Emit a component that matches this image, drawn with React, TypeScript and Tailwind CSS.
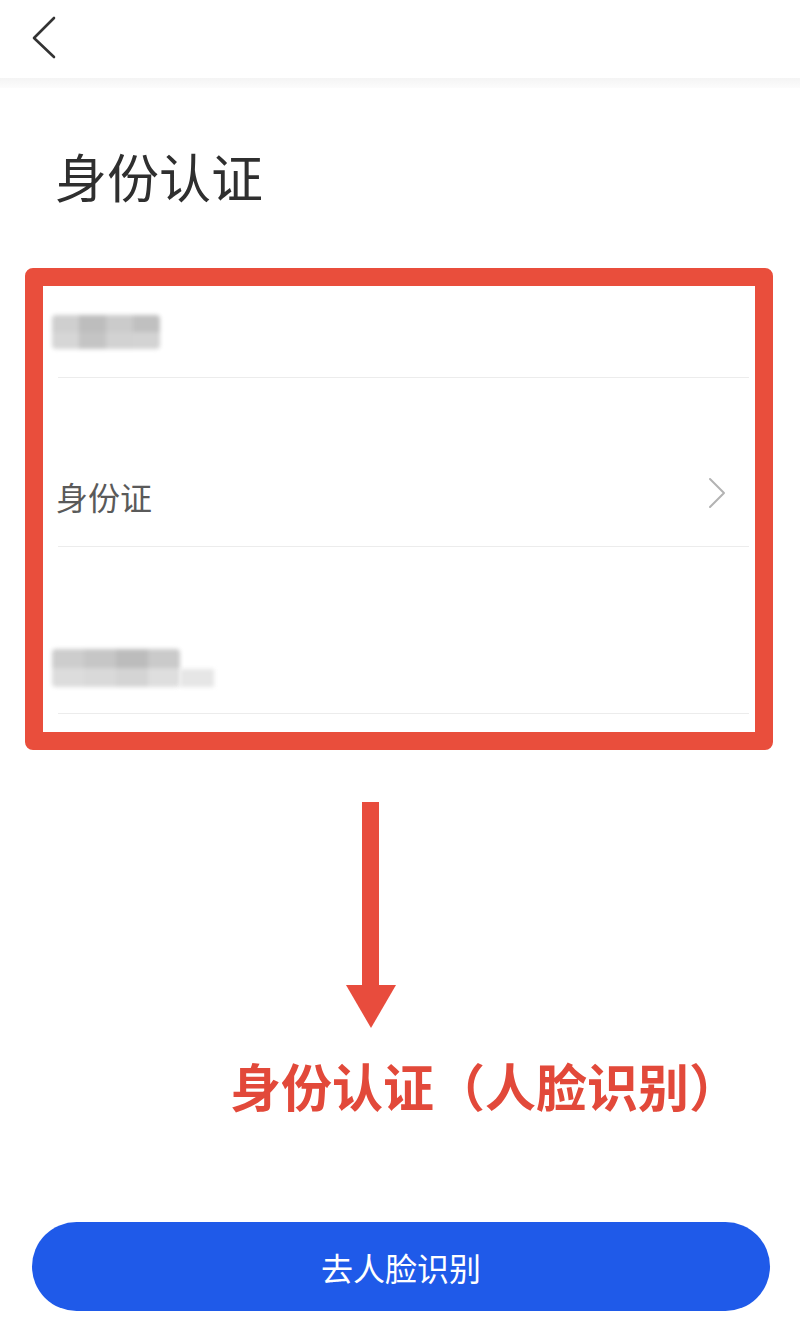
import React from "react";

const FONT = { fontFamily: '"Noto Sans CJK SC", "Noto Sans", sans-serif' };

function Mosaic({ cells, cols, cell, h }: { cells: string[]; cols: number; cell: number; h: number }) {
  return (
    <div
      className="grid blur-[2px] rounded-[4px] overflow-hidden"
      style={{ gridTemplateColumns: `repeat(${cols}, ${cell}px)`, gridAutoRows: `${h}px` }}
    >
      {cells.map((c, i) => (
        <div key={i} style={{ background: c }} />
      ))}
    </div>
  );
}

export default function App() {
  return (
    <div className="w-[800px] h-[1322px] bg-white overflow-hidden text-[#333]" style={FONT}>
      {/* Header */}
      <div className="h-[78px] relative">
        <svg className="absolute left-[30px] top-[15px]" width="28" height="46" viewBox="0 0 28 46">
          <polyline points="24,3 4,23 24,42" fill="none" stroke="#333" strokeWidth="2.6" strokeLinecap="round" strokeLinejoin="round" />
        </svg>
      </div>
      <div className="h-[10px] bg-gradient-to-b from-[#f4f4f4] to-[#fcfcfc]" />

      {/* Title */}
      <div className="mt-[60px] pl-[55px] text-[52px] leading-[56px] text-[#2f2f2f]">身份认证</div>

      {/* Red highlighted card */}
      <div className="mt-[64px] ml-[25px] w-[748px] h-[482px] border-[18px] border-[#e94e3c] rounded-[8px] bg-white flex flex-col">
        <div className="h-[91px] flex items-end pb-[28px] pl-[9px]">
          <Mosaic
            cols={4}
            cell={27}
            h={17}
            cells={["#cfcfcf", "#bdbdbd", "#cbcbcb", "#c0c0c0", "#d6d6d6", "#c4c4c4", "#d2d2d2", "#d3d3d3"]}
          />
        </div>
        <div className="h-[1px] ml-[15px] mr-[6px] bg-[#ececec]" />
        <div className="h-[168px] flex items-end pb-[30px] pl-[13px] pr-[28px] justify-between">
          <span className="text-[32px] leading-[40px] text-[#5a5a5a]">身份证</span>
          <svg className="mb-[7px]" width="20" height="32" viewBox="0 0 20 32">
            <polyline points="3,2 17,16 3,30" fill="none" stroke="#b3b3b3" strokeWidth="2" strokeLinecap="round" strokeLinejoin="round" />
          </svg>
        </div>
        <div className="h-[1px] ml-[15px] mr-[6px] bg-[#ececec]" />
        <div className="h-[166px] flex items-end pb-[26px] pl-[9px]">
          <div className="flex items-end">
            <Mosaic
              cols={4}
              cell={32}
              h={19}
              cells={["#cdcdcd", "#c6c6c6", "#bcbcbc", "#cacaca", "#dcdcdc", "#d9d9d9", "#d4d4d4", "#dedede"]}
            />
            <div className="w-[34px] h-[18px] bg-[#e6e6e6] blur-[2px]" />
          </div>
        </div>
        <div className="h-[1px] ml-[15px] mr-[6px] bg-[#ececec]" />
      </div>

      {/* Arrow */}
      <svg className="block mt-[52px] ml-[346px]" width="50" height="227" viewBox="0 0 50 227">
        <rect x="16" y="0" width="17" height="186" fill="#e84c3d" />
        <polygon points="0,183 50,183 25,226" fill="#e84c3d" />
      </svg>

      {/* Red caption */}
      <div className="mt-[28px] ml-[230px] text-[51px] leading-[56px] font-bold text-[#e2493a] whitespace-nowrap">
        身份认证（人脸识别）
      </div>

      {/* Button */}
      <div className="mt-[109px] ml-[32px] w-[738px] h-[89px] rounded-full bg-[#1f5ae9] flex items-center justify-center">
        <span className="text-[32px] leading-[40px] text-white">去人脸识别</span>
      </div>
    </div>
  );
}
